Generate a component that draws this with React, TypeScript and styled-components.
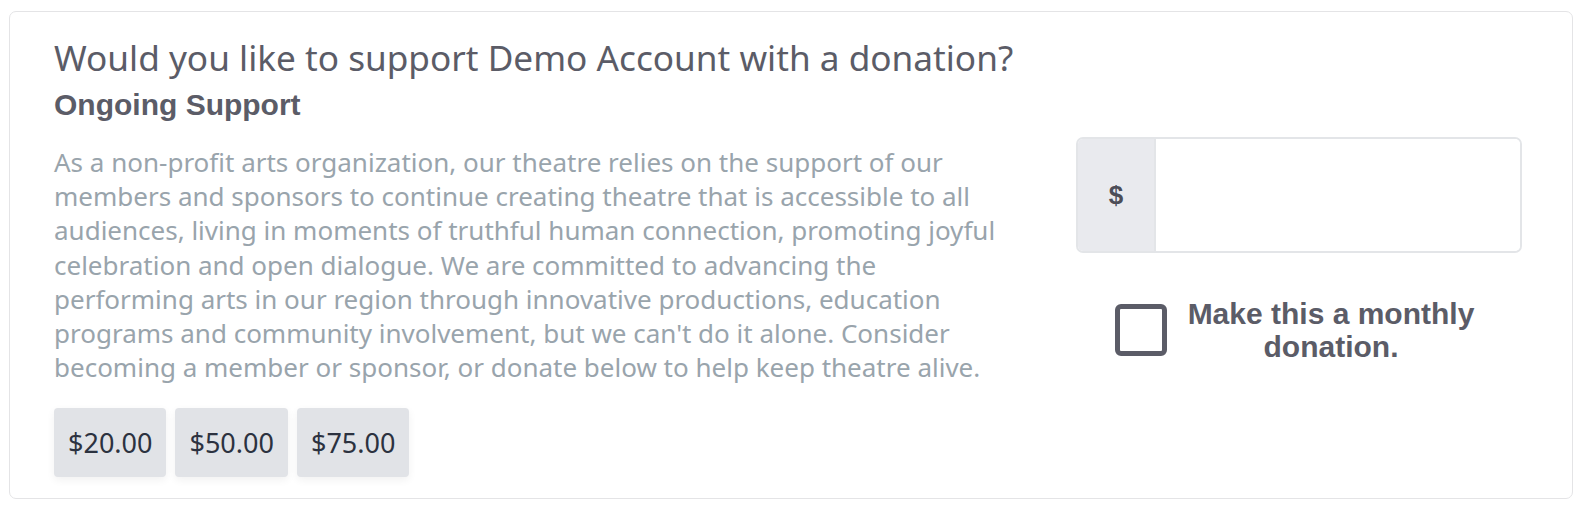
import styled, { createGlobalStyle } from 'styled-components';

const GlobalStyle = createGlobalStyle`
  html, body {
    margin: 0;
    padding: 0;
    background: #ffffff;
  }
  body {
    font-family: "Noto Sans", "Open Sans", sans-serif;
  }
`;

const Page = styled.div`
  padding: 11px 17px 0 9px;
`;

const Card = styled.section`
  box-sizing: border-box;
  width: 1564px;
  height: 488px;
  border: 1px solid #e4e4e6;
  border-radius: 7px;
  padding: 22px 50px 20px 44px;
`;

const Title = styled.h2`
  margin: 0;
  font-family: "Noto Sans", sans-serif;
  font-weight: 400;
  font-size: 35.2px;
  line-height: 46px;
  color: #5b5c67;
`;

const Row = styled.div`
  display: flex;
  justify-content: space-between;
`;

const Left = styled.div`
  width: 952px;
`;

const Subheading = styled.h3`
  margin: 8px 0 23px;
  font-family: "Liberation Sans", Arial, sans-serif;
  font-weight: 700;
  font-size: 30px;
  line-height: 34px;
  color: #5b5c67;
`;

const Body = styled.p`
  margin: 0;
  font-size: 26px;
  line-height: 34.2px;
  color: #99a4ac;
`;

const Amounts = styled.div`
  display: flex;
  gap: 9px;
  margin-top: 24px;
`;

const AmountButton = styled.button`
  height: 69px;
  padding: 0 14px;
  border: none;
  border-radius: 4px;
  background: #e1e3e7;
  box-shadow: 0 3px 8px rgba(0, 0, 0, 0.06);
  font-family: "Noto Sans", sans-serif;
  font-size: 27px;
  color: #2c3240;
  cursor: pointer;
`;

const Right = styled.div`
  width: 446px;
  padding-top: 57px;
  display: flex;
  flex-direction: column;
  align-items: center;
`;

const InputGroup = styled.div`
  display: flex;
  width: 100%;
  height: 116px;
  border: 2px solid #e3e5e8;
  border-radius: 7px;
  overflow: hidden;
  box-sizing: border-box;
`;

const Addon = styled.span`
  width: 76px;
  display: flex;
  align-items: center;
  justify-content: center;
  background: #e9eaee;
  border-right: 2px solid #e3e5e8;
  font-family: "Liberation Sans", Arial, sans-serif;
  font-weight: 700;
  font-size: 26px;
  color: #4c4d57;
`;

const AmountInput = styled.input`
  flex: 1;
  border: none;
  outline: none;
  padding: 0 16px;
  font-size: 24px;
  background: #ffffff;
`;

const CheckRow = styled.label`
  display: flex;
  align-items: center;
  gap: 21px;
  margin: 44px 9px 0 0;
  cursor: pointer;
`;

const Box = styled.span`
  box-sizing: border-box;
  width: 52px;
  height: 52px;
  border: 5px solid #5b5c67;
  border-radius: 6px;
  flex-shrink: 0;
`;

const CheckText = styled.span`
  text-align: center;
  font-family: "Liberation Sans", Arial, sans-serif;
  font-weight: 700;
  font-size: 30px;
  line-height: 33px;
  color: #5b5c67;
`;

const amounts = ['$20.00', '$50.00', '$75.00'];

const App = () => {
  return (
    <Page>
      <GlobalStyle />
      <Card>
        <Title>Would you like to support Demo Account with a donation?</Title>
        <Row>
          <Left>
            <Subheading>Ongoing Support</Subheading>
            <Body>
              As a non-profit arts organization, our theatre relies on the support of our
              members and sponsors to continue creating theatre that is accessible to all
              audiences, living in moments of truthful human connection, promoting joyful
              celebration and open dialogue. We are committed to advancing the performing
              arts in our region through innovative productions, education programs and
              community involvement, but we can't do it alone. Consider becoming a member or
              sponsor, or donate below to help keep theatre alive.
            </Body>
            <Amounts>
              {amounts.map((amount) => (
                <AmountButton key={amount}>{amount}</AmountButton>
              ))}
            </Amounts>
          </Left>
          <Right>
            <InputGroup>
              <Addon>$</Addon>
              <AmountInput type="text" aria-label="Donation amount" />
            </InputGroup>
            <CheckRow>
              <Box />
              <CheckText>
                Make this a monthly
                <br />
                donation.
              </CheckText>
            </CheckRow>
          </Right>
        </Row>
      </Card>
    </Page>
  );
};

export default App;
